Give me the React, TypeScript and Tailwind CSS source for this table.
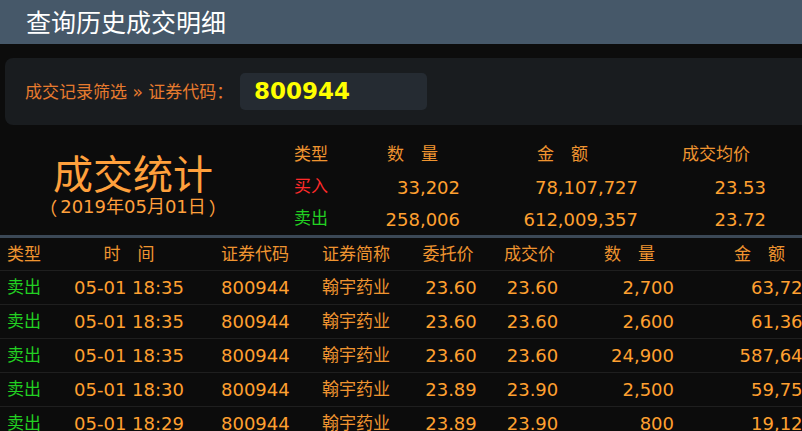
import React from "react";

const rows = [
  ["05-01 18:35", "23.60", "23.60", "2,700", "63,720"],
  ["05-01 18:35", "23.60", "23.60", "2,600", "61,360"],
  ["05-01 18:35", "23.60", "23.60", "24,900", "587,640"],
  ["05-01 18:30", "23.89", "23.90", "2,500", "59,750"],
  ["05-01 18:29", "23.89", "23.90", "800", "19,120"],
];

const gridCols = "grid grid-cols-[60px_138px_124px_88px_80px_82px_104px_154px]";

export default function App() {
  return (
    <div className="w-[802px] h-[431px] overflow-hidden bg-[#0c0c0c] font-['DejaVu_Sans','Noto_Sans_CJK_SC',sans-serif]">
      <div className="h-[44px] bg-[#465869] flex items-center pl-[26px] text-white text-[25px] font-['Noto_Sans_CJK_SC',sans-serif]">
        查询历史成交明细
      </div>

      <div className="pt-[14px] pl-[5px]">
        <div className="h-[67px] w-[830px] rounded-[8px] bg-[#191c1f] flex items-center pl-[20px]">
          <span className="w-[215px] text-[17px] text-[#e67a2e]">
            成交记录筛选 » 证券代码<span className="font-['Noto_Sans_CJK_SC',sans-serif]">：</span>
          </span>
          <div className="w-[187px] h-[37px] rounded-[5px] bg-[#252b32] flex items-center pl-[14px] text-[#ffff00] font-bold text-[23px]">
            800944
          </div>
        </div>
      </div>

      <div className="h-[110px] flex">
        <div className="w-[266px] flex flex-col items-center pt-[27px] text-[#ffa03c]">
          <div className="text-[40px] leading-[40px] font-['Noto_Sans_CJK_SC',sans-serif]">成交统计</div>
          <div className="mt-[5px] text-[18px] leading-[20px] flex items-center">
            <span className="font-['Noto_Sans_CJK_SC',sans-serif] mr-[3px]">（</span>
            <span>2019年05月01日</span>
            <span className="font-['Noto_Sans_CJK_SC',sans-serif] ml-[3px]">）</span>
          </div>
        </div>
        <div className="pl-[28px] pt-[14px]">
          <div className="grid grid-cols-[70px_96px_180px_130px] text-[17px] text-[#ef9430]">
            <div className="h-[32px] flex items-center">类型</div>
            <div className="h-[32px] flex items-center justify-end pr-[22px]">数　量</div>
            <div className="h-[32px] flex items-center justify-end pr-[52px]">金　额</div>
            <div className="h-[32px] flex items-center justify-end pr-[20px]">成交均价</div>

            <div className="h-[32px] flex items-center text-[#ff2a2a]">买入</div>
            <div className="h-[32px] flex items-center justify-end text-[18px] text-[#ffa030]">33,202</div>
            <div className="h-[32px] flex items-center justify-end pr-[2px] text-[18px] text-[#ffa030]">78,107,727</div>
            <div className="h-[32px] flex items-center justify-end pr-[4px] text-[18px] text-[#ffa030]">23.53</div>

            <div className="h-[32px] flex items-center text-[#22d022]">卖出</div>
            <div className="h-[32px] flex items-center justify-end text-[18px] text-[#ffa030]">258,006</div>
            <div className="h-[32px] flex items-center justify-end pr-[2px] text-[18px] text-[#ffa030]">612,009,357</div>
            <div className="h-[32px] flex items-center justify-end pr-[4px] text-[18px] text-[#ffa030]">23.72</div>
          </div>
        </div>
      </div>

      <div className="w-[830px] border-t-[3px] border-[#3b4856]">
        <div className={`${gridCols} h-[33px] border-b border-[#1f1f1f] text-[17px] text-[#ef9430]`}>
          <div className="flex items-center pl-[7px] pt-[2px]">类型</div>
          <div className="flex items-center justify-center pt-[2px]">时　间</div>
          <div className="flex items-center pl-[23px] pt-[2px]">证券代码</div>
          <div className="flex items-center pt-[2px]">证券简称</div>
          <div className="flex items-center justify-center pr-[4px] pt-[2px]">委托价</div>
          <div className="flex items-center justify-center pr-[3px] pt-[2px]">成交价</div>
          <div className="flex items-center justify-end pr-[21px] pt-[2px]">数　量</div>
          <div className="flex items-center justify-end pr-[45px] pt-[2px]">金　额</div>
        </div>
        {rows.map((r, i) => (
          <div key={i} className={`${gridCols} h-[34px] border-b border-[#1f1f1f] text-[18px] text-[#ffa030]`}>
            <div className="flex items-center pl-[7px] text-[17px] text-[#22d022]">卖出</div>
            <div className="flex items-center justify-center">{r[0]}</div>
            <div className="flex items-center pl-[23px]">800944</div>
            <div className="flex items-center text-[17px] text-[#ef9430]">翰宇药业</div>
            <div className="flex items-center justify-center pl-[2px]">{r[1]}</div>
            <div className="flex items-center justify-center pl-[3px]">{r[2]}</div>
            <div className="flex items-center justify-end pr-[2px]">{r[3]}</div>
            <div className="flex items-center justify-end pr-[16px]">{r[4]}</div>
          </div>
        ))}
      </div>
    </div>
  );
}
